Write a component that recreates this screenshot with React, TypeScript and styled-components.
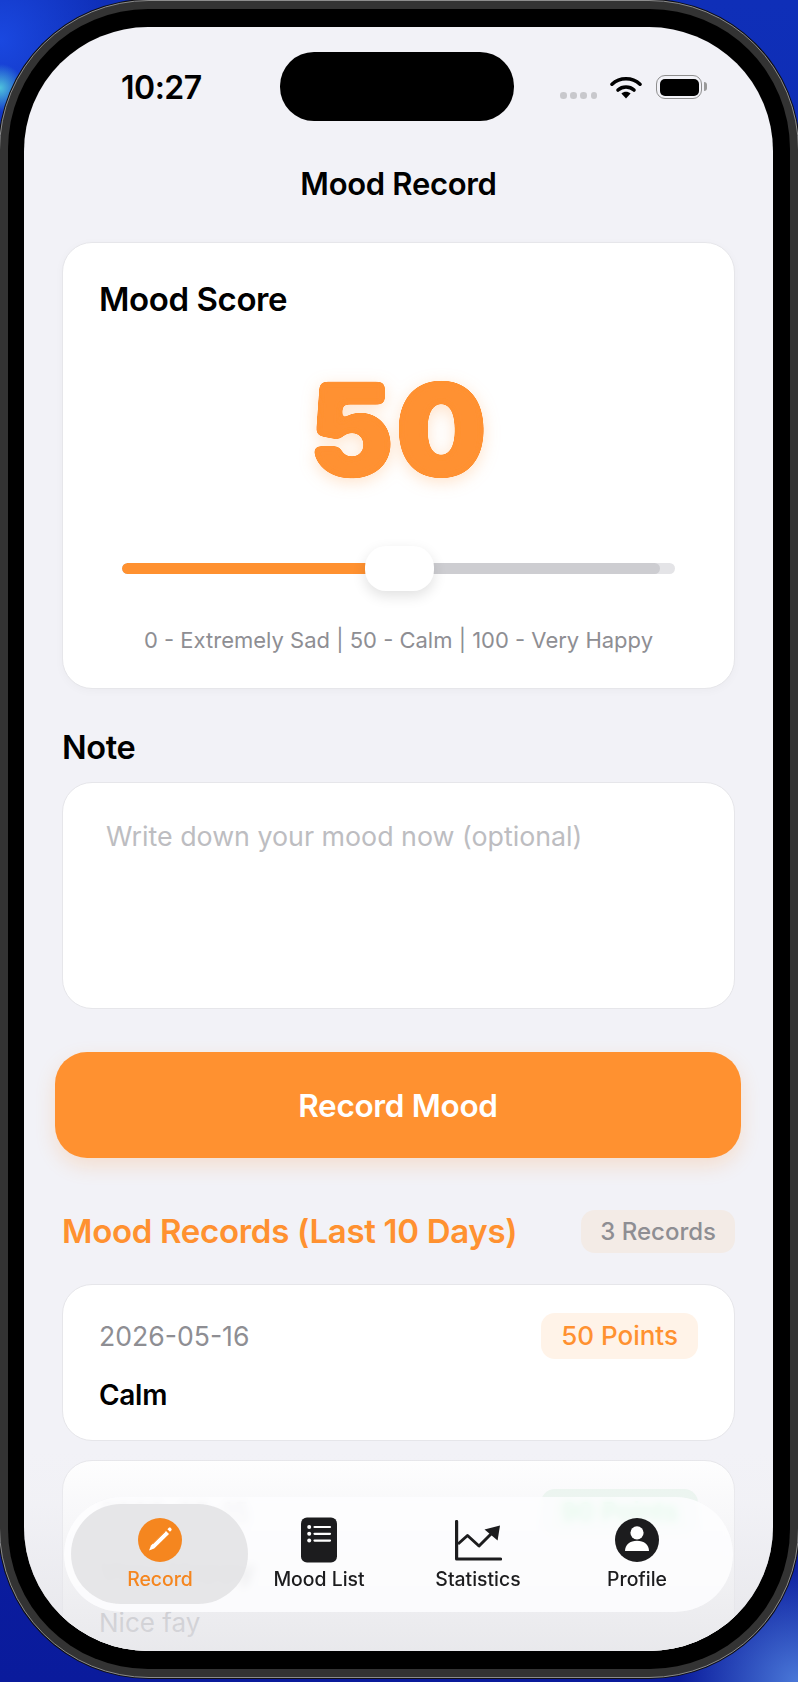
import { FC, ReactNode } from 'react';
import styled, { createGlobalStyle } from 'styled-components';

const GlobalStyle = createGlobalStyle`
  html, body {
    margin: 0;
    padding: 0;
  }
  body {
    font-family: Inter, "Liberation Sans", sans-serif;
    -webkit-font-smoothing: antialiased;
  }
`;

const Backdrop = styled.div`
  width: 798px;
  height: 1682px;
  overflow: hidden;
  background:
    radial-gradient(circle 24px at 0 88px, #4fc3dc 0%, rgba(79, 195, 220, 0) 100%),
    radial-gradient(circle 110px at 0 40px, #1a48e0 0%, rgba(26, 72, 224, 0) 100%),
    radial-gradient(circle 120px at 100% 1682px, #4a78d8 0%, rgba(74, 120, 216, 0) 100%),
    linear-gradient(180deg, #0f2fb8 0%, #0a1b9c 100%);
`;

const Frame = styled.div`
  box-sizing: border-box;
  width: 800px;
  height: 1678px;
  margin-left: -1px;
  padding: 8px;
  border: 1.5px solid #8c8c8c;
  border-radius: 150px;
  background: #333333;
  box-shadow: 0 0 0 1px #101014;
`;

const Bezel = styled.div`
  box-sizing: border-box;
  height: 100%;
  padding: 18px 17px 18px 16px;
  border-radius: 140px;
  background: #000;
`;

const Screen = styled.div`
  position: relative;
  height: 100%;
  overflow: hidden;
  border-radius: 124px;
  background: #f2f2f7;
`;

const StatusBar = styled.div`
  display: grid;
  grid-template-columns: 256px 234px 1fr;
  padding-top: 25px;
`;

const Time = styled.div`
  padding: 18px 0 0 97px;
  font-size: 32px;
  line-height: 36px;
  font-weight: 600;
  letter-spacing: -0.5px;
  color: #000;
`;

const Island = styled.div`
  height: 69px;
  border-radius: 34px;
  background: #000;
`;

const StatusIcons = styled.div`
  display: flex;
  align-items: flex-start;
  padding: 23px 0 0 46px;
`;

const Dots = styled.div`
  display: flex;
  gap: 3.6px;
  margin: 17px 13px 0 0;
`;

const Dot = styled.span`
  width: 6.6px;
  height: 6.6px;
  border-radius: 50%;
  background: #c8c8cc;
`;

const Battery = styled.div`
  box-sizing: border-box;
  position: relative;
  width: 46px;
  height: 24px;
  margin-left: 14px;
  padding: 2.5px;
  border: 1.5px solid #8e8e8e;
  border-radius: 9px;

  &::before {
    content: '';
    display: block;
    height: 100%;
    border-radius: 5px;
    background: #000;
  }

  &::after {
    content: '';
    position: absolute;
    right: -6px;
    top: 6px;
    width: 3px;
    height: 9px;
    border-radius: 0 3px 3px 0;
    background: #9a9a9a;
  }
`;

const Title = styled.h1`
  margin: 44px 0 0;
  text-align: center;
  font-size: 31px;
  line-height: 38px;
  font-weight: 600;
  letter-spacing: -0.3px;
  color: #000;
`;

const Content = styled.div`
  display: flex;
  flex-direction: column;
  padding: 0 38px;
`;

const Card = styled.section`
  box-sizing: border-box;
  margin-top: 39px;
  padding: 38px 36px 33px;
  border: 1px solid #e6e6ea;
  border-radius: 30px;
  background: #fff;
  box-shadow: 0 2px 10px rgba(0, 0, 0, 0.03);
`;

const CardTitle = styled.h2`
  margin: 0;
  font-size: 33px;
  line-height: 36px;
  font-weight: 600;
  letter-spacing: -0.4px;
  color: #000;
`;

const ScoreGlow = styled.div`
  margin-top: 48px;
  filter: drop-shadow(0 4px 8px rgba(255, 145, 48, 0.25));
`;

const Score = styled.div`
  text-align: center;
  font-size: 128px;
  line-height: 130px;
  font-weight: 900;
  letter-spacing: 2px;
  color: #ff9130;
  filter: url(#round-corners);
`;

const FilterDefs = styled.svg`
  display: block;
  width: 0;
  height: 0;
`;

const Slider = styled.div`
  position: relative;
  display: flex;
  align-items: center;
  height: 45px;
  margin: 51px 23px 0;
`;

const Track = styled.div`
  position: relative;
  width: 100%;
  height: 11px;
  overflow: hidden;
  border-radius: 6px;
  background: #e4e4e7;
`;

const TrackRest = styled.div`
  height: 100%;
  width: 97.3%;
  border-radius: 6px;
  background: #cdcdd1;
`;

const TrackFill = styled.div`
  position: absolute;
  left: 0;
  top: 0;
  height: 100%;
  border-radius: 6px 0 0 6px;
  background: #ff9130;
`;

const Thumb = styled.div`
  position: absolute;
  top: 0;
  width: 69px;
  height: 45px;
  margin-left: -34px;
  border-radius: 21px;
  background: #fff;
  box-shadow: 0 5px 14px rgba(0, 0, 0, 0.12);
`;

const Hint = styled.div`
  margin-top: 34px;
  text-align: center;
  font-size: 22px;
  line-height: 30px;
  color: #8e8e93;
`;

const NoteLabel = styled.div`
  margin-top: 41px;
  font-size: 32.5px;
  line-height: 36px;
  font-weight: 600;
  letter-spacing: -0.4px;
  color: #000;
`;

const NoteInput = styled.textarea`
  box-sizing: border-box;
  display: block;
  width: 100%;
  height: 227px;
  margin-top: 16px;
  padding: 37px 43px;
  border: 1px solid #e6e6ea;
  border-radius: 30px;
  outline: none;
  resize: none;
  background: #fff;
  font-family: inherit;
  font-size: 26.8px;
  line-height: 32px;

  &::placeholder {
    color: #bdbdc1;
    opacity: 1;
  }
`;

const RecordButton = styled.button`
  height: 106px;
  margin: 43px -6px 0 -7px;
  border: 0;
  border-radius: 32px;
  background: #ff9130;
  color: #fff;
  font-family: inherit;
  font-size: 31.5px;
  font-weight: 600;
  letter-spacing: -0.3px;
  box-shadow: 0 8px 20px rgba(255, 145, 48, 0.2);
`;

const SectionHead = styled.div`
  display: flex;
  align-items: center;
  justify-content: space-between;
  margin-top: 52px;
`;

const SectionTitle = styled.h3`
  margin: 0;
  font-size: 33px;
  line-height: 43px;
  font-weight: 600;
  letter-spacing: -0.3px;
  color: #ff9130;
`;

const CountPill = styled.div`
  padding: 0 19px;
  border-radius: 14px;
  background: #f3ebe6;
  font-size: 24px;
  line-height: 43px;
  font-weight: 500;
  color: #8e8e93;
`;

const RecordList = styled.div`
  display: flex;
  flex-direction: column;
  gap: 19px;
  margin-top: 31px;
`;

const RecordCard = styled.article`
  box-sizing: border-box;
  padding: 28px 36px;
  border: 1px solid #e6e6ea;
  border-radius: 30px;
  background: #fff;
`;

const RecordTop = styled.div`
  display: flex;
  align-items: center;
  justify-content: space-between;
`;

const RecordDate = styled.div`
  font-size: 26.6px;
  line-height: 34px;
  color: #8e8e93;
`;

const PointsPill = styled.div<{ $bg: string; $fg: string }>`
  padding: 0 20px;
  border-radius: 14px;
  background: ${(p) => p.$bg};
  color: ${(p) => p.$fg};
  font-size: 26px;
  line-height: 46px;
  font-weight: 500;
`;

const RecordMood = styled.div`
  margin-top: 19px;
  font-size: 28px;
  line-height: 34px;
  font-weight: 600;
  letter-spacing: -0.3px;
  color: #000;
`;

const RecordNote = styled.div`
  margin-top: 19px;
  font-size: 26px;
  line-height: 32px;
  color: #8e8e93;
`;

const BottomFade = styled.div`
  position: absolute;
  left: 0;
  right: 0;
  bottom: 0;
  height: 200px;
  pointer-events: none;
  background: linear-gradient(
    180deg,
    rgba(240, 240, 244, 0) 0%,
    rgba(240, 240, 244, 0.4) 25%,
    rgba(229, 229, 233, 0.86) 100%
  );
`;

const TabBar = styled.nav`
  position: absolute;
  left: 40px;
  right: 40px;
  bottom: 39px;
  display: grid;
  grid-template-columns: repeat(4, 159px);
  justify-content: center;
  height: 115px;
  border-radius: 58px;
  background: rgba(254, 254, 255, 0.82);
  backdrop-filter: blur(4px);
`;

const Tab = styled.div<{ $active?: boolean }>`
  position: relative;
  display: flex;
  flex-direction: column;
  align-items: center;
  justify-content: flex-end;
  height: 100%;
  padding-bottom: 21px;
  box-sizing: border-box;
  font-size: 19.4px;
  line-height: 24px;
  font-weight: 500;
  color: ${(p) => (p.$active ? '#f5861f' : '#1c1c1e')};

  &::before {
    content: ${(p) => (p.$active ? "''" : 'none')};
    position: absolute;
    left: -10px;
    right: -8px;
    top: 7px;
    bottom: 8px;
    border-radius: 50px;
    background: rgba(226, 226, 229, 0.88);
  }
`;

const TabIcon = styled.div`
  position: relative;
  display: flex;
  align-items: center;
  justify-content: center;
  height: 46px;
  margin-bottom: 4px;
`;

const TabLabel = styled.span`
  position: relative;
`;

const WifiIcon: FC = () => (
  <svg width="32" height="24" viewBox="0 0 32 24">
    <path d="M2 9.2C9.8 2 22.2 2 30 9.2" fill="none" stroke="#000" strokeWidth="3.6" strokeLinecap="round" />
    <path d="M8 15C12.4 11 19.6 11 24 15" fill="none" stroke="#000" strokeWidth="3.6" strokeLinecap="round" />
    <path d="M11.4 18.6C14 16.2 18 16.2 20.6 18.6L16 23.6Z" fill="#000" />
  </svg>
);

const PencilIcon: FC = () => (
  <svg width="44" height="44" viewBox="0 0 44 44">
    <circle cx="22" cy="22" r="22" fill="#f5861f" />
    <path d="M11 32.5L13 27.4L27.8 12.8L31 16L16.2 30.6Z" fill="#fff" />
    <path d="M29.4 11.2L30.6 10C31.3 9.4 32.2 9.4 32.8 10L33.2 10.4C33.8 11 33.8 11.9 33.2 12.6L32 13.8Z" fill="#fff" />
    <path d="M15 25.6L27.6 13.2" stroke="#f5861f" strokeWidth="1" fill="none" />
  </svg>
);

const ListIcon: FC = () => (
  <svg width="36" height="46" viewBox="0 0 36 46">
    <rect x="0" y="0.5" width="36" height="45" rx="6" fill="#1c1c1e" />
    <g fill="#fff">
      <circle cx="8.2" cy="10" r="2" />
      <circle cx="8.2" cy="16.8" r="2" />
      <circle cx="8.2" cy="23.6" r="2" />
    </g>
    <g stroke="#fff" strokeWidth="2.2" strokeLinecap="round">
      <path d="M13.5 10H29" />
      <path d="M13.5 16.8H29" />
      <path d="M13.5 23.6H29" />
    </g>
  </svg>
);

const ChartIcon: FC = () => (
  <svg width="47" height="41" viewBox="0 0 47 41">
    <path d="M1.6 1.5V39H45.5" fill="none" stroke="#1c1c1e" strokeWidth="3.2" strokeLinecap="round" strokeLinejoin="round" />
    <path d="M3 24L12.5 15.5L24 26L37 13" fill="none" stroke="#1c1c1e" strokeWidth="3" strokeLinejoin="round" />
    <path d="M29.5 9.5L45 5.5L42.6 20.5Z" fill="#1c1c1e" />
  </svg>
);

const PersonIcon: FC = () => (
  <svg width="44" height="44" viewBox="0 0 44 44">
    <circle cx="22" cy="22" r="22" fill="#1c1c1e" />
    <circle cx="22" cy="14.8" r="6.6" fill="#fff" />
    <path d="M10 33C10 26.6 15 22.8 22 22.8S34 26.6 34 33Z" fill="#fff" />
  </svg>
);

interface TabItem {
  label: string;
  icon: ReactNode;
  active?: boolean;
}

const tabs: TabItem[] = [
  { label: 'Record', icon: <PencilIcon />, active: true },
  { label: 'Mood List', icon: <ListIcon /> },
  { label: 'Statistics', icon: <ChartIcon /> },
  { label: 'Profile', icon: <PersonIcon /> },
];

const App: FC = () => {
  const score = 50;

  return (
    <Backdrop>
      <GlobalStyle />
      <FilterDefs aria-hidden="true">
        <filter id="round-corners" x="-10%" y="-10%" width="120%" height="120%">
          <feGaussianBlur in="SourceGraphic" stdDeviation="3.2" />
          <feColorMatrix values="1 0 0 0 0  0 1 0 0 0  0 0 1 0 0  0 0 0 16 -5" />
        </filter>
      </FilterDefs>
      <Frame>
        <Bezel>
          <Screen>
            <StatusBar>
              <Time>10:27</Time>
              <Island />
              <StatusIcons>
                <Dots>
                  <Dot />
                  <Dot />
                  <Dot />
                  <Dot />
                </Dots>
                <WifiIcon />
                <Battery />
              </StatusIcons>
            </StatusBar>
            <Title>Mood Record</Title>
            <Content>
              <Card>
                <CardTitle>Mood Score</CardTitle>
                <ScoreGlow>
                  <Score>{score}</Score>
                </ScoreGlow>
                <Slider>
                  <Track>
                    <TrackRest />
                    <TrackFill style={{ width: `${score}%` }} />
                  </Track>
                  <Thumb style={{ left: `${score}%` }} />
                </Slider>
                <Hint>0 - Extremely Sad | 50 - Calm | 100 - Very Happy</Hint>
              </Card>
              <NoteLabel>Note</NoteLabel>
              <NoteInput placeholder="Write down your mood now (optional)" />
              <RecordButton>Record Mood</RecordButton>
              <SectionHead>
                <SectionTitle>Mood Records (Last 10 Days)</SectionTitle>
                <CountPill>3 Records</CountPill>
              </SectionHead>
              <RecordList>
                <RecordCard>
                  <RecordTop>
                    <RecordDate>2026-05-16</RecordDate>
                    <PointsPill $bg="#fff3e8" $fg="#ff9130">50 Points</PointsPill>
                  </RecordTop>
                  <RecordMood>Calm</RecordMood>
                </RecordCard>
                <RecordCard>
                  <RecordTop>
                    <RecordDate>2026-05-15</RecordDate>
                    <PointsPill $bg="#eaf7ee" $fg="#00e040">90 Points</PointsPill>
                  </RecordTop>
                  <RecordMood>Very Happy</RecordMood>
                  <RecordNote>Nice fay</RecordNote>
                </RecordCard>
              </RecordList>
            </Content>
            <BottomFade />
            <TabBar>
              {tabs.map((tab) => (
                <Tab key={tab.label} $active={tab.active}>
                  <TabIcon>{tab.icon}</TabIcon>
                  <TabLabel>{tab.label}</TabLabel>
                </Tab>
              ))}
            </TabBar>
          </Screen>
        </Bezel>
      </Frame>
    </Backdrop>
  );
};

export default App;
